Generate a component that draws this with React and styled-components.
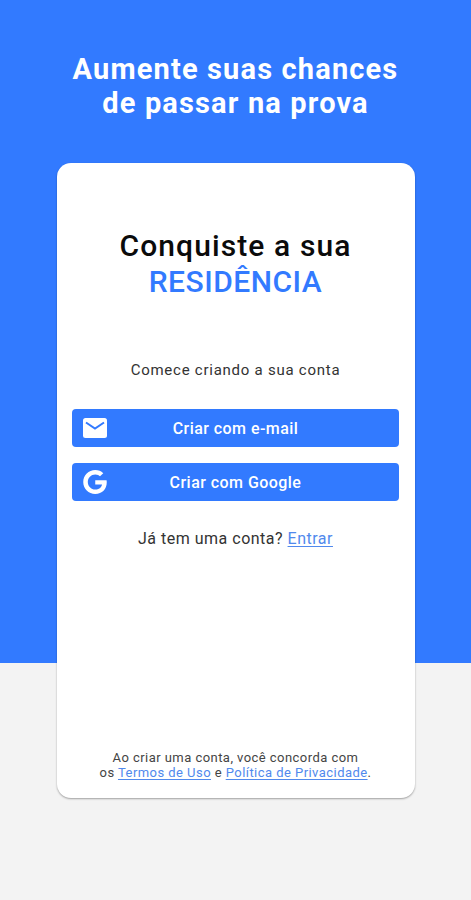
import React from "react";
import styled, { createGlobalStyle } from "styled-components";

const Global = createGlobalStyle`
  * { box-sizing: border-box; }
  body { margin: 0; font-family: Roboto, sans-serif; }
`;
const Page = styled.main`
  width: 471px; height: 900px; overflow: hidden;
  display: flex; flex-direction: column; align-items: center;
  background: linear-gradient(#327aff 663px, #f3f3f3 663px);
`;
const Headline = styled.h1`
  margin: 52px 0 0; height: 111px; text-align: center; color: #fff; white-space: nowrap;
  font-size: 29px; line-height: 34px; font-weight: 700; letter-spacing: 1.15px;
`;
const Card = styled.section`
  width: 358px; height: 635px; padding: 65px 15px 18px; background: #fff;
  border-radius: 14px; box-shadow: 0 1px 2px rgba(0,0,0,.35);
  display: flex; flex-direction: column; align-items: center;
`;
const Title = styled.h2`
  margin: 0; text-align: center; color: #0b0b0b; white-space: nowrap;
  font-size: 30px; line-height: 36px; font-weight: 500; letter-spacing: 1.1px;
`;
const Accent = styled.span`
  display: block; color: #327aff; letter-spacing: .5px;
`;
const Lead = styled.p`
  margin: 60px 0 29px; color: #333; font-size: 15px; line-height: 20px; letter-spacing: .75px; white-space: nowrap;
`;
const Actions = styled.div`
  width: 327px; display: flex; flex-direction: column; gap: 16px;
`;
const Button = styled.button`
  height: 38px; border: 0; border-radius: 4px; padding: 0 11px;
  display: grid; grid-template-columns: 24px 1fr 24px; align-items: center;
  background: #327aff; color: #fff; font: 500 16px Roboto, sans-serif; letter-spacing: .45px;
  svg { display: block; }
`;
const Login = styled.p`
  margin: 28px 0 0; color: #333; font-size: 16px; line-height: 20px; letter-spacing: .5px; white-space: nowrap;
`;
const Link = styled.a`
  color: #5089ed; text-decoration: underline; text-underline-offset: 2px; text-decoration-thickness: 1px;
`;
const Terms = styled.p`
  margin: auto 0 0; text-align: center; color: #444; font-size: 13px; line-height: 15px; letter-spacing: .45px; white-space: nowrap;
`;

const MailIcon = () => (
  <svg width="24" height="20" viewBox="0 0 24 20">
    <rect width="24" height="20" rx="2.5" fill="#fff" />
    <path d="M3 4.5l9 6 9-6" fill="none" stroke="#327aff" strokeWidth="2" />
  </svg>
);
const GoogleIcon = () => (
  <svg width="24" height="24" viewBox="0 0 24 24">
    <path fill="#fff" d="M12.24 10.285V14.4h6.806c-.275 1.765-2.056 5.174-6.806 5.174-4.095 0-7.439-3.389-7.439-7.574s3.345-7.574 7.439-7.574c2.33 0 3.891.989 4.785 1.849l3.254-3.138C18.189 1.186 15.479 0 12.24 0c-6.635 0-12 5.365-12 12s5.365 12 12 12c6.926 0 11.52-4.869 11.52-11.726 0-.788-.085-1.39-.189-1.989H12.24z" />
  </svg>
);

export default function App() {
  return (
    <>
      <Global />
      <Page>
        <Headline>Aumente suas chances<br />de passar na prova</Headline>
        <Card>
          <Title>Conquiste a sua<Accent>RESIDÊNCIA</Accent></Title>
          <Lead>Comece criando a sua conta</Lead>
          <Actions>
            <Button><MailIcon /><span>Criar com e-mail</span></Button>
            <Button><GoogleIcon /><span>Criar com Google</span></Button>
          </Actions>
          <Login>Já tem uma conta? <Link>Entrar</Link></Login>
          <Terms>Ao criar uma conta, você concorda com<br />os <Link>Termos de Uso</Link> e <Link>Política de Privacidade</Link>.</Terms>
        </Card>
      </Page>
    </>
  );
}
